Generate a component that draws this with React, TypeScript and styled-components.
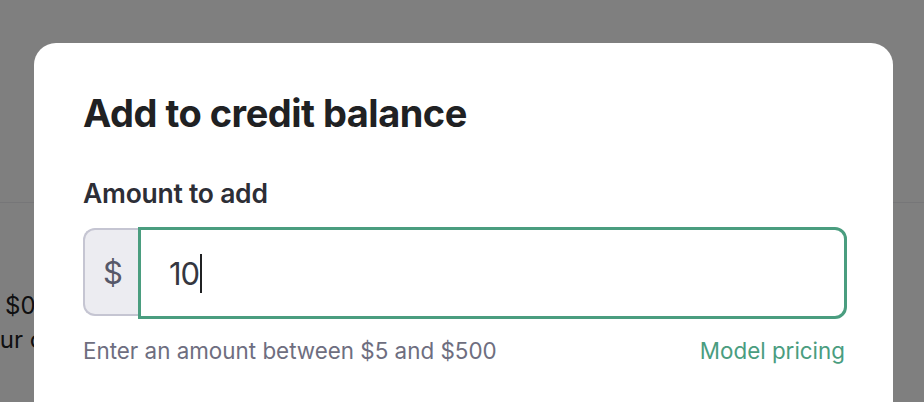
import React from 'react';
import styled, { createGlobalStyle } from 'styled-components';

const GlobalStyle = createGlobalStyle`
  html, body {
    margin: 0;
    padding: 0;
    width: 100%;
    height: 100%;
    overflow: hidden;
    background: #ffffff;
    font-family: Inter, "Noto Sans", "Liberation Sans", sans-serif;
  }
`;

const Page = styled.main`
  width: 100%;
  height: 100vh;
  display: flex;
  flex-direction: column;
  overflow: hidden;
  color: #202123;
`;

const PageDivider = styled.div`
  margin-top: 202px;
  height: 1px;
  background: #ececf1;
`;

const BalanceColumn = styled.div`
  width: 34px;
  overflow: hidden;
  display: flex;
  flex-direction: column;
`;

const BalanceAmount = styled.div`
  margin-top: 87px;
  padding-left: 5px;
  font-size: 24px;
  line-height: 32px;
  white-space: nowrap;
`;

const BalanceNote = styled.div`
  margin-left: -29px;
  font-size: 24px;
  line-height: 36px;
  white-space: nowrap;
`;

const Backdrop = styled.div`
  position: fixed;
  inset: 0;
  background: rgba(0, 0, 0, 0.5);
`;

const Modal = styled.section`
  position: fixed;
  left: 34px;
  right: 31px;
  top: 43px;
  bottom: -60px;
  background: #ffffff;
  border-radius: 22px;
  padding: 46px 46px 0 49px;
  display: flex;
  flex-direction: column;
`;

const Title = styled.h1`
  margin: 0;
  font-size: 38px;
  line-height: 48px;
  font-weight: 700;
  letter-spacing: -0.5px;
  color: #202123;
`;

const FieldLabel = styled.label`
  margin-top: 39px;
  font-size: 26.5px;
  line-height: 34px;
  font-weight: 600;
  letter-spacing: -0.25px;
  color: #2d2e36;
`;

const InputGroup = styled.div`
  margin-top: 17px;
  display: flex;
  align-items: stretch;
  height: 92px;
`;

const Addon = styled.div`
  width: 55px;
  margin: 1px 0 3px;
  display: flex;
  align-items: center;
  justify-content: center;
  background: #ececf1;
  border: 2px solid #c5c5d2;
  border-right: none;
  border-radius: 12px 0 0 12px;
  box-sizing: border-box;
  font-size: 31px;
  padding-left: 3px;
  color: #565869;
`;

const Field = styled.div`
  flex: 1;
  display: flex;
  align-items: center;
  padding-left: 28px;
  border: 3.5px solid #4a9d7f;
  border-radius: 0 12px 12px 0;
  font-size: 31px;
  color: #353740;
  letter-spacing: -1px;
`;

const Caret = styled.span`
  display: inline-block;
  width: 2px;
  height: 39px;
  margin-left: 1px;
  background: #202123;
`;

const HelpRow = styled.div`
  margin-top: 18px;
  display: flex;
  justify-content: space-between;
  align-items: baseline;
  font-size: 22.4px;
  line-height: 28px;
`;

const HelpText = styled.span`
  color: #6e6e80;
`;

const PricingLink = styled.a`
  color: #4a9d7f;
  text-decoration: none;
  margin-right: 2px;
`;

export default function App() {
  return (
    <>
      <GlobalStyle />
      <Page>
        <PageDivider />
        <BalanceColumn>
          <BalanceAmount>$0.00</BalanceAmount>
          <BalanceNote>Your credit</BalanceNote>
        </BalanceColumn>
      </Page>
      <Backdrop />
      <Modal>
        <Title>Add to credit balance</Title>
        <FieldLabel>Amount to add</FieldLabel>
        <InputGroup>
          <Addon>$</Addon>
          <Field>
            10
            <Caret />
          </Field>
        </InputGroup>
        <HelpRow>
          <HelpText>Enter an amount between $5 and $500</HelpText>
          <PricingLink href="#">Model pricing</PricingLink>
        </HelpRow>
      </Modal>
    </>
  );
}
